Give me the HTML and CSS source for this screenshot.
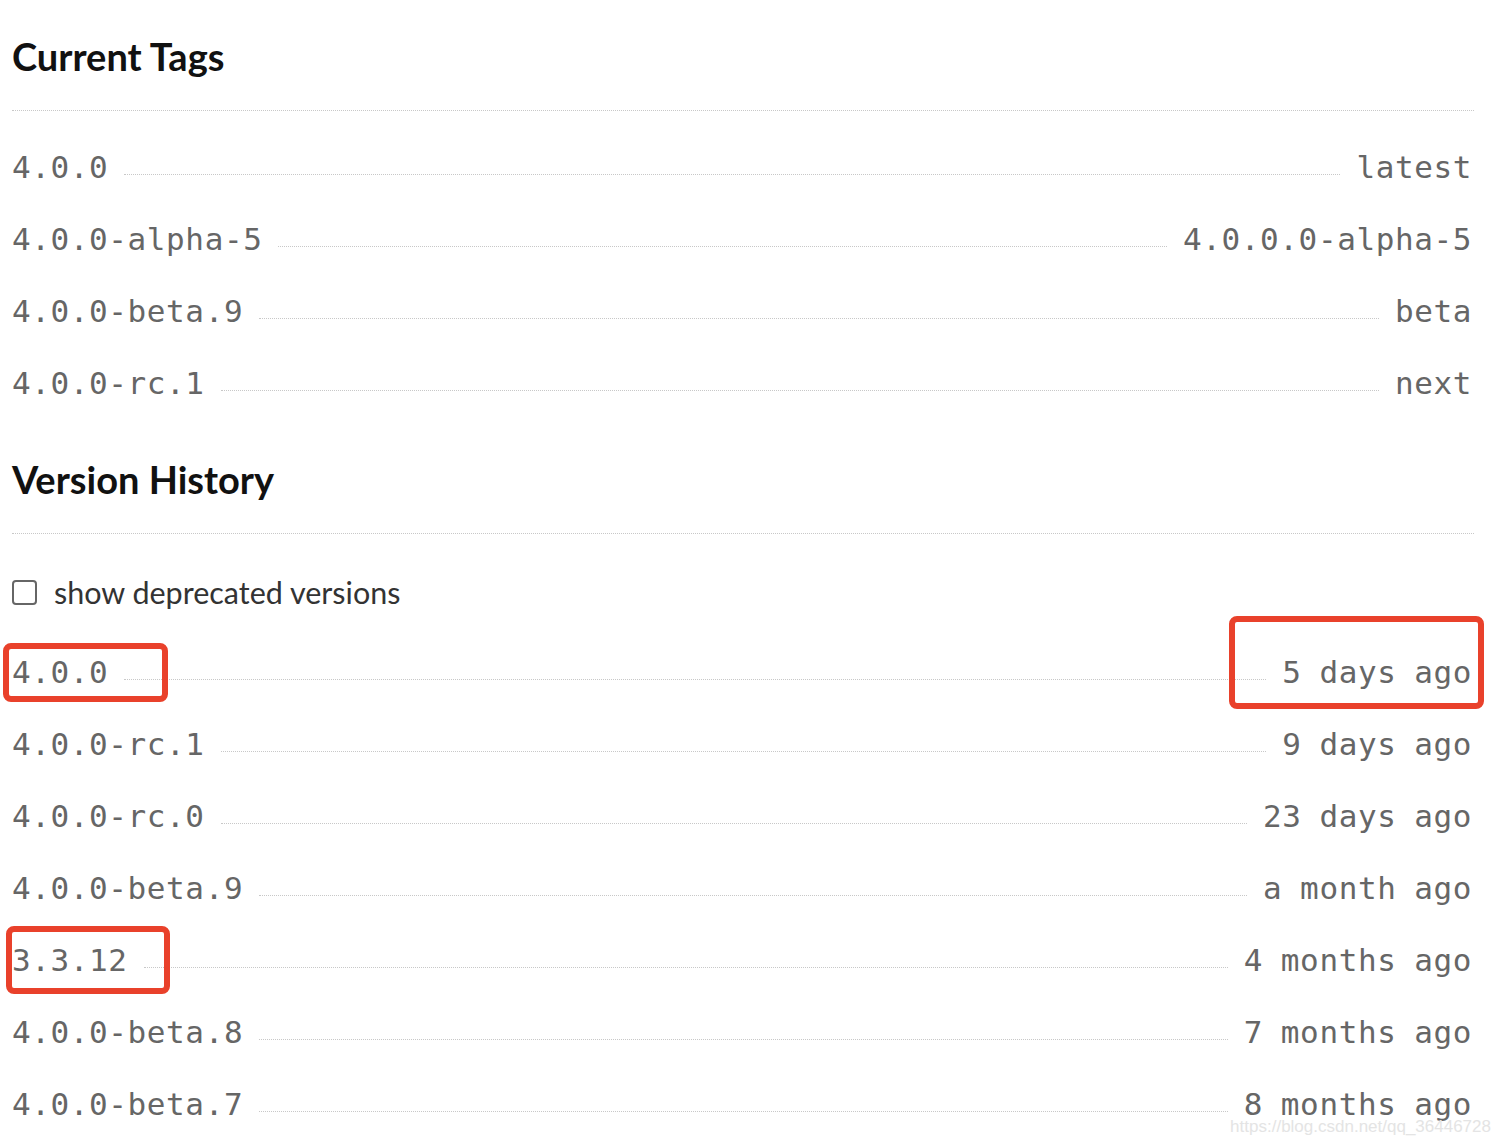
FILE: index.html
```html
<!DOCTYPE html>
<html lang="en">
<head>
<meta charset="utf-8">
<title>Versions</title>
<link rel="stylesheet" href="styles.css">
</head>
<body>
<div class="page">
  <section class="section">
    <h2 class="heading">Current Tags</h2>
    <ul class="list">
      <li class="row"><span class="ver">4.0.0</span><span class="leader"></span><span class="meta">latest</span></li>
      <li class="row"><span class="ver">4.0.0-alpha-5</span><span class="leader"></span><span class="meta">4.0.0.0-alpha-5</span></li>
      <li class="row"><span class="ver">4.0.0-beta.9</span><span class="leader"></span><span class="meta">beta</span></li>
      <li class="row"><span class="ver">4.0.0-rc.1</span><span class="leader"></span><span class="meta">next</span></li>
    </ul>
  </section>
  <section class="section section-history">
    <h2 class="heading">Version History</h2>
    <label class="check-row"><input type="checkbox" class="check"><span class="check-label">show deprecated versions</span></label>
    <ul class="list">
      <li class="row"><span class="ver">4.0.0</span><span class="leader"></span><span class="meta">5 days ago</span></li>
      <li class="row"><span class="ver">4.0.0-rc.1</span><span class="leader"></span><span class="meta">9 days ago</span></li>
      <li class="row"><span class="ver">4.0.0-rc.0</span><span class="leader"></span><span class="meta">23 days ago</span></li>
      <li class="row"><span class="ver">4.0.0-beta.9</span><span class="leader"></span><span class="meta">a month ago</span></li>
      <li class="row"><span class="ver">3.3.12</span><span class="leader"></span><span class="meta">4 months ago</span></li>
      <li class="row"><span class="ver">4.0.0-beta.8</span><span class="leader"></span><span class="meta">7 months ago</span></li>
      <li class="row"><span class="ver">4.0.0-beta.7</span><span class="leader"></span><span class="meta">8 months ago</span></li>
    </ul>
  </section>
</div>
<div class="mark mark-1"></div>
<div class="mark mark-2"></div>
<div class="mark mark-3"></div>
<div class="watermark">https://blog.csdn.net/qq_36446728</div>
</body>
</html>
```
FILE: styles.css
```css
html, body {
  margin: 0;
  padding: 0;
  background: #fff;
}
body {
  width: 1500px;
  height: 1144px;
  overflow: hidden;
  position: relative;
}
.page {
  padding: 0 26px 0 12px;
}
.heading {
  margin: 0;
  height: 111px;
  box-sizing: border-box;
  padding-top: 31px;
  font-family: "Lato", "Noto Sans", sans-serif;
  font-weight: 700;
  font-size: 38px;
  line-height: 50px;
  color: #111;
  border-bottom: 1px dotted #c8c8c8;
}
.section-history {
  margin-top: 4px;
}
.list {
  list-style: none;
  margin: 0;
  padding: 20px 0 0 0;
}
.section-history .list {
  padding-top: 0;
}
.row {
  display: flex;
  align-items: center;
  height: 72px;
  font-family: "DejaVu Sans Mono", "Liberation Mono", monospace;
  font-size: 31px;
  letter-spacing: 0.6px;
  color: #666;
}
.leader {
  flex: 1;
  height: 0;
  margin: 14px 16px 0 16px;
  border-bottom: 1px dotted #c8c8c8;
}
.meta {
  margin-right: 2px;
  word-spacing: -1.5px;
}
.check-row {
  display: flex;
  align-items: center;
  height: 102px;
  padding-top: 14px;
  box-sizing: border-box;
}
.check {
  appearance: none;
  -webkit-appearance: none;
  margin: 0;
  width: 25px;
  height: 25px;
  box-sizing: border-box;
  border: 2px solid #666;
  border-radius: 4px;
  background: #fff;
}
.check-label {
  margin-left: 17px;
  font-family: "Lato", "Noto Sans", sans-serif;
  font-size: 30.5px;
  color: #333;
}
.mark {
  position: absolute;
  box-sizing: border-box;
  border: 6px solid #e9412b;
  border-radius: 8px;
}
.mark-1 { left: 3px; top: 643px; width: 165px; height: 59px; }
.mark-2 { left: 1229px; top: 616px; width: 255px; height: 93px; }
.mark-3 { left: 6px; top: 926px; width: 164px; height: 68px; }
.watermark {
  position: absolute;
  right: 9px;
  bottom: 7px;
  font-family: "Liberation Sans", Arial, sans-serif;
  font-size: 17px;
  color: #e4e4e4;
}
```
